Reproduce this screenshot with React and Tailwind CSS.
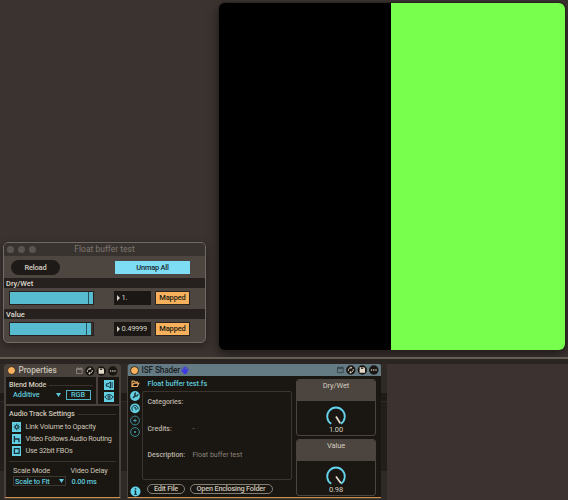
import { clsx } from "clsx";

function Param({ name, value, fill }) {
  return (
    <div>
      <div className="h-[10px] bg-[#26211f] pl-[2px] text-[7.5px] leading-[12px] font-medium text-[#ded8cc]">
        {name}
      </div>
      <div className="flex h-[21px] items-start pt-[3px] pl-[5px]">
        <div className="flex h-[14px] w-[85px] border border-[#26211e] bg-[#38322f]">
          <div className="border-r border-[#26535d] bg-[#57bcd0]" style={{ width: fill }} />
          <div className="w-[4px] bg-[#57bcd0]" />
        </div>
        <div className="ml-[20px] flex h-[14px] w-[37px] items-center bg-[#1a1714] pl-[3px] text-[7.5px] tracking-[-0.25px] text-[#d8d2c6]">
          <svg className="mr-[1.5px] h-[6px] w-[3px]" viewBox="0 0 3 6">
            <path d="M0 0L3 3L0 6Z" fill="currentColor" />
          </svg>
          {value}
        </div>
        <div className="ml-[4px] flex h-[14px] w-[35px] items-center justify-center border border-[#2b2521] bg-[#f7b15c] text-[7.5px] font-medium tracking-[-0.15px] text-[#211b14]">
          Mapped
        </div>
      </div>
    </div>
  );
}

function ParamWindow() {
  return (
    <div className="absolute top-[242px] left-[3px] h-[101px] w-[203px] overflow-hidden rounded-[5px] border border-[#716b66] bg-[#4c4540] shadow-[0_3px_9px_rgba(0,0,0,0.4)]">
      <div className="relative flex h-[13px] items-center justify-center bg-[#39332f] text-[8.5px] text-[#7e7771]">
        <div className="absolute left-[3px] flex gap-[4px]">
          <span className="size-[7px] rounded-full bg-[#5b5551]" />
          <span className="size-[7px] rounded-full bg-[#5b5551]" />
          <span className="size-[7px] rounded-full bg-[#5b5551]" />
        </div>
        Float buffer test
      </div>
      <div className="flex h-[22px] items-center pl-[7px]">
        <div className="mt-px flex h-[15px] w-[49px] items-center justify-center rounded-full bg-[#1e1a18] text-[7.5px] font-medium tracking-[-0.2px] text-[#d5cec2]">
          Reload
        </div>
        <div className="ml-[55px] flex h-[13px] w-[75px] items-center justify-center bg-[#7dddf5] pt-[2px] text-[7.5px] font-medium tracking-[-0.25px] text-[#1c2a2e]">
          Unmap All
        </div>
      </div>
      <Param name="Dry/Wet" value="1." fill={79} />
      <Param name="Value" value="0.49999" fill={77} />
    </div>
  );
}

function HeaderIcons({ dark }) {
  return (
    <svg className="h-[12px] w-[44px]" viewBox="0 0 44 12" fill="none">
      <g stroke={dark ? "#34444a" : "#8d857b"} strokeWidth="0.9">
        <path d="M1.5 3.5H7.2V8.6H1.5ZM1.5 4.6H7.2M2.7 2.3V3.5M6 2.3V3.5" />
      </g>
      <circle cx="14.8" cy="6" r="4.7" fill="#191511" />
      <circle cx="26.3" cy="6" r="4.7" fill="#191511" />
      <circle cx="37.8" cy="6" r="4.7" fill="#191511" />
      <g stroke="#d8d0c2" strokeWidth="1">
        <path d="M12.4 6.9C12.1 5 13.3 3.7 15 3.7M17.2 5.1C17.5 7 16.3 8.3 14.6 8.3" />
      </g>
      <path d="M14.6 2.3L16.4 3.7L14.6 5.1ZM15 6.9L13.2 8.3L15 9.7Z" fill="#d8d0c2" />
      <path d="M23.6 3.3H28L29 4.3V8.7H23.6Z" fill="#e2dacb" />
      <path d="M25 3.5H27.2V5H25Z" fill="#3a332c" />
      <g fill="#d8d0c2">
        <circle cx="35.6" cy="6" r="0.8" />
        <circle cx="37.8" cy="6" r="0.8" />
        <circle cx="40" cy="6" r="0.8" />
      </g>
    </svg>
  );
}

function Tile({ className, children }) {
  return (
    <svg className={clsx("shrink-0 bg-[#62cfe2]", className)} viewBox="0 0 10 10" fill="none" stroke="#173039">
      {children}
    </svg>
  );
}

function PropertiesDevice() {
  return (
    <div className="h-[135px] w-[117px] rounded-t-[3px] bg-[#48413c] px-[2px]">
      <div className="flex h-[13px] items-center">
        <span className="ml-px size-[9px] rounded-full border-[0.5px] border-[#2b2520] bg-[#f9b35e]" />
        <span className="ml-[2.5px] flex-1 text-[8.2px] font-medium text-[#c9c1b4]">Properties</span>
        <HeaderIcons />
      </div>
      <div className="flex h-[27px] gap-[2.5px]">
        <div className="w-[89.5px] bg-[#1a1612] pt-[3px] pl-[3px]">
          <div className="flex h-[10px] items-center gap-[3px] text-[7.2px] font-medium tracking-[-0.1px] text-[#d5cdbf]">
            Blend Mode
            <span className="mr-[3px] h-px flex-1 bg-[#37322d]" />
          </div>
          <div className="flex h-[10px] items-center text-[7.3px] font-medium text-[#5fc9db]">
            <span className="ml-[4px] w-[42.5px]">Additive</span>
            <svg className="h-[4px] w-[5px]" viewBox="0 0 5 4">
              <path d="M0 0H5L2.5 4Z" fill="currentColor" />
            </svg>
            <span className="ml-[5px] flex h-[10px] w-[25px] items-center justify-center border border-[#55b3c4]">
              RGB
            </span>
          </div>
        </div>
        <div className="flex flex-1 flex-col items-center gap-[2px] bg-[#1a1612] pt-[3px]">
          <Tile className="h-[10px] w-[10px]">
            <path d="M2.3 3.8H4.2L6.4 2V8L4.2 6.2H2.3Z" />
            <path d="M8.1 2V8" />
          </Tile>
          <Tile className="h-[10px] w-[10px]">
            <path d="M0.8 5C3 1.9 7 1.9 9.2 5C7 8.1 3 8.1 0.8 5Z" />
            <circle cx="5" cy="5" r="1.1" />
          </Tile>
        </div>
      </div>
      <div className="mt-[2px] h-[91px] bg-[#1a1612] pt-[4px] text-[7.3px] tracking-[-0.2px] text-[#cdc5b7]">
        <div className="flex h-[9px] items-center gap-[3px] pl-[3px] font-medium tracking-[-0.1px]">
          Audio Track Settings
          <span className="mr-[3px] h-px flex-1 bg-[#37322d]" />
        </div>
        <div className="mt-[3px] flex flex-col gap-[2px] pl-[5.5px]">
          <div className="flex h-[10px] items-center gap-[4.5px]">
            <Tile className="h-[10px] w-[9.5px]">
              <path d="M5 1.5V8.5M1.5 5H8.5M2.5 2.5L7.5 7.5M7.5 2.5L2.5 7.5" />
              <circle cx="5" cy="5" r="1.5" fill="#62cfe2" />
            </Tile>
            Link Volume to Opacity
          </div>
          <div className="flex h-[10px] items-center gap-[4.5px] tracking-[-0.25px]">
            <Tile className="h-[10px] w-[9.5px]">
              <path d="M2.5 1.8V8.5M2.5 5H7.3V8.5" strokeWidth="1.4" />
            </Tile>
            Video Follows Audio Routing
          </div>
          <div className="flex h-[10px] items-center gap-[4.5px]">
            <Tile className="h-[10px] w-[9.5px]">
              <path d="M2.5 2.5H7.5V7.5H2.5Z" strokeWidth="1.3" />
            </Tile>
            Use 32bit FBOs
          </div>
        </div>
        <div className="mx-[3px] mt-[5px] h-px bg-[#37322d]" />
        <div className="mt-[4px] flex pl-[7px] tracking-[-0.1px]">
          <div className="w-[57.5px]">
            <div className="h-[10px] leading-[10px]">Scale Mode</div>
            <div className="flex h-[10px] w-[53px] items-center justify-between border border-[#3d3832] px-[1px] leading-[10px] font-medium tracking-[-0.15px] text-[#5fc9db]">
              <span className="pt-px">Scale to Fit</span>
              <svg className="h-[4px] w-[5px]" viewBox="0 0 5 4">
                <path d="M0 0H5L2.5 4Z" fill="currentColor" />
              </svg>
            </div>
          </div>
          <div className="whitespace-nowrap">
            <div className="h-[10px] leading-[10px]">Video Delay</div>
            <div className="pl-[1px] leading-[11px] font-medium tracking-[-0.2px] text-[#5fc9db]">0.00 ms</div>
          </div>
        </div>
      </div>
      <div className="-mx-px h-px bg-[#c98e4c]" />
    </div>
  );
}

function Knob({ label, value, angle }) {
  return (
    <div className="flex h-[57px] flex-col items-center overflow-hidden rounded-[3px] border border-[#4a433e] text-[7.5px] tracking-[-0.1px] text-[#d5cdbf]">
      <div className="h-[21px] w-full shrink-0 bg-[#4b443f] pt-[1px] text-center leading-[10px]">{label}</div>
      <svg className="mt-[5px] h-[20px] w-[22px] shrink-0" viewBox="0 0 22 20" fill="none">
        <path d="M6.2 17.7A8.8 8.8 0 1 1 15.8 17.7" stroke="#62d3ea" strokeWidth="1.8" />
        <path d="M11 10.5V18.5" stroke="#e3dccf" strokeWidth="1.7" transform={`rotate(${angle} 11 10.5)`} />
      </svg>
      <div className="-mt-[1px] leading-[9px]">{value}</div>
    </div>
  );
}

function IsfDevice() {
  return (
    <div className="h-[135px] w-[254px] rounded-t-[3px] border-l border-[#48413c] bg-[#1a1612]">
      <div className="flex h-[12px] items-center rounded-t-[2px] bg-[#647b84] pr-[1px] pl-[2px]">
        <span className="size-[9px] rounded-full border-[0.5px] border-[#2b2520] bg-[#f9b35e]" />
        <span className="ml-[2.5px] text-[8.2px] font-medium tracking-[-0.1px] text-[#191d1e]">ISF Shader</span>
        <svg className="ml-[1px] h-[9px] w-[8px]" viewBox="0 0 8 9" fill="none" stroke="#3d35e8" strokeLinecap="round">
          <path d="M2.5 4.5L1.8 1.7M3.7 4V0.9M5 4L5.5 1.2M6.1 4.8L7.3 3.1M2 5.8L0.6 4.2" strokeWidth="1.1" />
          <path d="M2.4 4.5H6L5.6 7.2L3.4 7.6Z" fill="#3d35e8" />
        </svg>
        <span className="flex-1" />
        <HeaderIcons dark />
      </div>
      <div className="flex h-[121px]">
        <div className="flex w-[14px] flex-col items-center justify-between pt-[3px] pb-0">
          <svg className="h-[63px] w-[12px]" viewBox="0 0 12 63" fill="none">
            <path d="M3 7.5V2H5L6 3H8.5V4.2M3 7.5L4.5 4.3H9.8L8.2 7.5Z" stroke="#f0ae5f" strokeWidth="1.1" />
            <circle cx="6" cy="17" r="4.9" fill="#62cfe2" />
            <path d="M4 19L7 16" stroke="#1a2a2e" strokeWidth="1.5" />
            <path d="M8.8 15A1.6 1.6 0 1 1 7 13.9" stroke="#1a2a2e" strokeWidth="1.1" />
            <circle cx="6" cy="29.3" r="4.9" fill="#62cfe2" />
            <path d="M3.6 31.6A3.1 3.1 0 1 1 9 30.3M5 28.8H7V31.2" stroke="#1a2a2e" />
            <circle cx="6" cy="41.5" r="4.4" stroke="#439aa9" strokeWidth="0.9" />
            <path d="M4.2 41.5H7.8M6 39.7V43.3" stroke="#439aa9" />
            <circle cx="6" cy="53" r="4.4" stroke="#439aa9" strokeWidth="0.9" />
            <circle cx="6" cy="53" r="1.1" fill="#439aa9" />
          </svg>
          <svg className="h-[11px] w-[11px]" viewBox="0 0 11 11">
            <circle cx="5.5" cy="5.5" r="5" fill="#62d3ea" />
            <path d="M4.2 4.5H6.2V8H7V8.8H4V8H4.8V5.3H4.2ZM4.7 2.2H6.3V3.6H4.7Z" fill="#15252a" />
          </svg>
        </div>
        <div className="w-[150px] text-[7.3px]">
          <div className="h-[15px] pl-[5.5px] leading-[16px] font-medium tracking-[-0.05px] text-[#5fc9db]">
            Float buffer test.fs
          </div>
          <div className="h-[89px] w-[149.5px] rounded-[2px] border border-[#3a352f] pt-[5px] pl-[4.5px] text-[7px] text-[#bdb5a8]">
            <div className="h-[26.5px] leading-[10px] font-medium">Categories:</div>
            <div className="flex h-[26.5px] leading-[10px]">
              <span className="w-[45px] font-medium">Credits:</span>
              <span className="text-[#8c857b]">-</span>
            </div>
            <div className="flex leading-[10px]">
              <span className="w-[45px] font-medium">Description:</span>
              <span className="text-[#8c857b]">Float buffer test</span>
            </div>
          </div>
          <div className="flex gap-[4.5px] pt-[4px] pl-[5px] text-[7.3px] font-medium tracking-[-0.2px] text-[#cdc5b7]">
            <span className="flex h-[10px] w-[38px] items-center justify-center rounded-full border border-[#857e73]">
              <span className="pt-px">Edit File</span>
            </span>
            <span className="flex h-[10px] w-[83px] shrink-0 items-center justify-center rounded-full border border-[#857e73] whitespace-nowrap">
              <span className="pt-px">Open Enclosing Folder</span>
            </span>
          </div>
        </div>
        <div className="ml-[4px] flex w-[80px] flex-col gap-[3px] pt-[3px]">
          <Knob label="Dry/Wet" value="1.00" angle={-32} />
          <Knob label="Value" value="0.98" angle={-36} />
        </div>
      </div>
      <div className="h-px bg-[#c98e4c]" />
      <div className="h-px bg-[#48413c]" />
    </div>
  );
}

// thin slot showing the device chain rail behind the devices
function Rail({ className }) {
  return (
    <div className={clsx("h-[136px] bg-[#302a27] pt-[29px]", className)}>
      <div className="h-[8px] bg-[#1e1a18]" />
      <div className="mt-px h-[69px] bg-[#221e1b]" />
    </div>
  );
}

export default function App() {
  return (
    <div className="relative h-[500px] w-[568px] overflow-hidden bg-[#3b3330] font-['Roboto',sans-serif]">
      <div className="h-[357px] bg-[#3b3330]">
        <ParamWindow />
        <div className="absolute top-[3px] left-[218.5px] flex h-[347px] w-[346px] overflow-hidden rounded-[6px] bg-black shadow-[0_0_0_1px_#292421,0_4px_12px_rgba(0,0,0,0.55)]">
          <div className="w-[172.5px]" />
          <div className="flex-1 bg-[#78ff4d]" />
        </div>
      </div>
      <div className="relative h-[2px] bg-[#655e55]" />
      <div className="relative flex h-[141px] bg-[#2a2522] pt-[5px]">
        <Rail className="w-[4px]" />
        <PropertiesDevice />
        <Rail className="w-[6px]" />
        <IsfDevice />
        <Rail className="w-[6px]" />
        <div className="flex-1 bg-[#3c3331]" />
      </div>
    </div>
  );
}
